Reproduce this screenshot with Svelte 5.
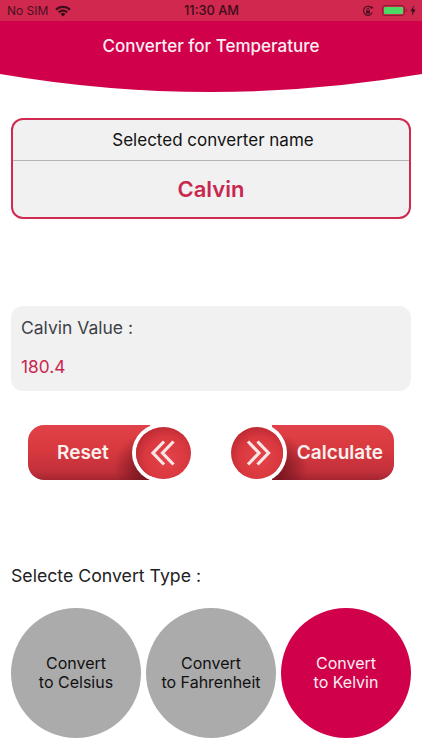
<script lang="ts">
    const types = [
        { top: 'Convert', bottom: 'to Celsius', active: false },
        { top: 'Convert', bottom: 'to Fahrenheit', active: false },
        { top: 'Convert', bottom: 'to Kelvin', active: true },
    ]
</script>

<div class="page">
    <header>
        <div class="status">
            <div class="status-left">
                <span>No SIM</span>
                <svg class="wifi" viewBox="0 0 16 12" width="16" height="12">
                    <path d="M0.3 3.9A11 11 0 0 1 15.7 3.9L14.2 5.5A9 9 0 0 0 1.8 5.5Z" fill="#3c0d1a" />
                    <path d="M3 6.6A7.2 7.2 0 0 1 13 6.6L11.5 8.1A5 5 0 0 0 4.5 8.1Z" fill="#3c0d1a" />
                    <path d="M5.5 9A3.6 3.6 0 0 1 10.500 9L8 11.600Z" fill="#3c0d1a" />
                </svg>
            </div>
            <div class="clock">11:30 AM</div>
            <div class="status-right">
                <svg viewBox="0 0 12 12" width="12" height="12">
                    <path d="M10.200 7.500A4.500 4.500 0 1 1 10 3.600" fill="none" stroke="#4a1020" stroke-width="1.200" />
                    <path d="M8.800 2.400L11.200 3.400L10.500 1Z" fill="#4a1020" />
                    <rect x="4" y="5.500" width="4" height="3" fill="#4a1020" />
                    <path d="M4.800 5.500V4.500A1.200 1.200 0 0 1 7.200 4.500V5.500" fill="none" stroke="#4a1020" stroke-width="0.800" />
                </svg>
                <div class="battery"><div class="level"></div></div>
                <div class="nub"></div>
                <svg viewBox="0 0 7 12" width="6" height="11">
                    <path d="M4.500 0L0.500 6.800H3L2.200 12L6.500 4.800H3.800Z" fill="#33101c" />
                </svg>
            </div>
        </div>
        <div class="nav">Converter for Temperature</div>
        <svg class="curve" viewBox="0 0 422 21" width="422" height="21" preserveAspectRatio="none">
            <path d="M0 0H422V3Q211 39 0 3Z" fill="#d1004b" />
        </svg>
    </header>

    <main>
        <section class="selected">
            <div class="selected-label">Selected converter name</div>
            <div class="selected-name">Calvin</div>
        </section>

        <section class="value">
            <div class="value-label">Calvin Value :</div>
            <div class="value-number">180.4</div>
        </section>

        <div class="actions">
            <button class="pill reset">
                <span class="pill-text">Reset</span>
                <span class="knob">
                    <svg viewBox="0 0 30 30" width="30" height="30">
                        <path d="M15 3.500L4 15L15 26.500M24.500 3.500L13.500 15L24.500 26.500" fill="none" stroke="#f8e6e6" stroke-width="3.200" />
                    </svg>
                </span>
            </button>
            <button class="pill calculate">
                <span class="knob">
                    <svg viewBox="0 0 30 30" width="30" height="30">
                        <path d="M6 3.500L17 15L6 26.500M15.500 3.500L26.500 15L15.500 26.500" fill="none" stroke="#f8e6e6" stroke-width="3.200" />
                    </svg>
                </span>
                <span class="pill-text">Calculate</span>
            </button>
        </div>

        <h2>Selecte Convert Type :</h2>

        <div class="types">
            {#each types as type}
                <button class="type" class:active={type.active}>
                    {type.top}<br />{type.bottom}
                </button>
            {/each}
        </div>
    </main>
</div>

<style>
    :global(body) {
        margin: 0;
        background: #fff;
    }

    .page {
        width: 422px;
        height: 750px;
        overflow: hidden;
        font-family: Inter, 'Liberation Sans', sans-serif;
    }

    header {
        display: flex;
        flex-direction: column;
    }

    .status {
        height: 21px;
        background: #d0284f;
        display: grid;
        grid-template-columns: 1fr auto 1fr;
        align-items: center;
        padding: 0 6px 0 7px;
        color: #4a1020;
        font-size: 12px;
    }

    .status-left {
        display: flex;
        align-items: center;
        gap: 7px;
    }

    .clock {
        font-weight: 500;
        font-size: 12.800px;
        color: #3c0d1a;
    }

    .status-right {
        display: flex;
        align-items: center;
        justify-content: flex-end;
    }

    .battery {
        margin-left: 8px;
        border: 1px solid #8a1c36;
        border-radius: 3px;
        padding: 1px;
        box-sizing: content-box;
        width: 19px;
        height: 7px;
    }

    .level {
        height: 100%;
        background: #4cd964;
        border-radius: 1px;
    }

    .nub {
        width: 1px;
        height: 3px;
        margin: 0 3px 0 1px;
        background: #8a1c36;
    }

    .nav {
        background: #d1004b;
        height: 50px;
        display: flex;
        align-items: center;
        justify-content: center;
        color: #fbeef2;
        font-size: 17px;
        font-weight: 500;
    }

    .curve {
        display: block;
    }

    main {
        padding: 26px 11px 0;
    }

    .selected {
        height: 101px;
        box-sizing: border-box;
        border: 2px solid #cf2a50;
        border-radius: 12px;
        background: #f1f1f1;
        display: flex;
        flex-direction: column;
    }

    .selected-label {
        height: 40px;
        padding-left: 4px;
        display: flex;
        align-items: center;
        justify-content: center;
        border-bottom: 1px solid #b4b4b4;
        font-size: 17px;
        color: #111;
    }

    .selected-name {
        flex: 1;
        padding-bottom: 1px;
        display: flex;
        align-items: center;
        justify-content: center;
        color: #c9274f;
        font-size: 22px;
        font-weight: 600;
    }

    .value {
        height: 85px;
        margin-top: 87px;
        padding: 11px 10px 0;
        box-sizing: border-box;
        background: #f1f1f1;
        border-radius: 12px;
    }

    .value-label {
        font-size: 17.500px;
        line-height: 22px;
        color: #3e4148;
    }

    .value-number {
        margin-top: 17px;
        font-size: 17.300px;
        line-height: 22px;
        color: #c9274f;
    }

    .actions {
        margin: 34px 17px 0;
        display: flex;
        justify-content: space-between;
    }

    button {
        border: 0;
        padding: 0;
        font-family: inherit;
    }

    .pill {
        position: relative;
        height: 55px;
        width: 122px;
        color: #fbf0ee;
        font-size: 19px;
        font-weight: 600;
        display: flex;
        align-items: center;
    }

    .reset {
        border-radius: 16px 0 0 16px;
        margin-right: 41px;
        background:
            radial-gradient(ellipse 34px 34px at 120px 42px, rgba(70, 5, 15, 0.7), rgba(70, 5, 15, 0) 100%),
            linear-gradient(180deg, #df4248 0%, #d8393f 45%, #c1303a 85%, #a32530 100%);
    }

    .calculate {
        border-radius: 0 16px 16px 0;
        margin-left: 41px;
        justify-content: flex-end;
        background:
            radial-gradient(ellipse 34px 34px at 2px 42px, rgba(70, 5, 15, 0.7), rgba(70, 5, 15, 0) 100%),
            linear-gradient(180deg, #df4248 0%, #d8393f 45%, #c1303a 85%, #a32530 100%);
    }

    .reset .pill-text {
        margin-left: 29px;
    }

    .calculate .pill-text {
        margin-right: 11px;
    }

    /* knob sits on the end of the pill with a white ring cut into it */
    .knob {
        position: absolute;
        top: 2px;
        width: 52px;
        height: 52px;
        border-radius: 50%;
        background: radial-gradient(circle at 55% 60%, #e4434a 0%, #d9383f 50%, #a01c28 100%);
        box-shadow: 0 0 0 4px #fff;
        display: flex;
        align-items: center;
        justify-content: center;
    }

    .reset .knob {
        right: -41px;
        width: 55px;
    }

    .calculate .knob {
        left: -41px;
    }

    h2 {
        margin: 85px 0 0;
        font-size: 17.700px;
        line-height: 22px;
        font-weight: 400;
        color: #222;
    }

    .types {
        margin-top: 21px;
        display: flex;
        justify-content: space-between;
    }

    .type {
        width: 130px;
        height: 130px;
        border-radius: 50%;
        background: #ababab;
        color: #111;
        font-size: 16px;
        line-height: 19px;
        text-align: center;
    }

    .type.active {
        background: #d1004b;
        color: #fbeef2;
    }
</style>
